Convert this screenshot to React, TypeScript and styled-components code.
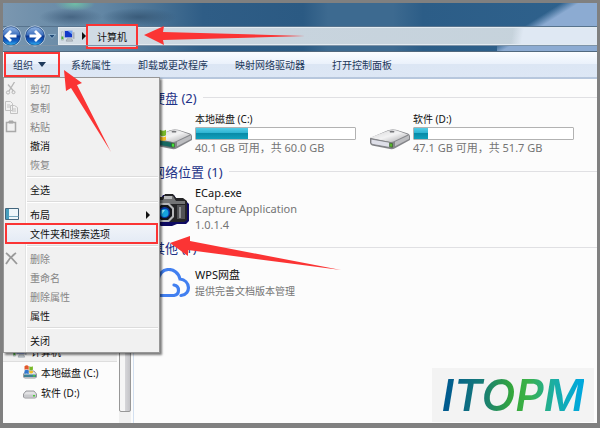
import React from "react";
import styled, { createGlobalStyle } from "styled-components";

const Global = createGlobalStyle`
  * { box-sizing: border-box; }
  body {
    margin: 0;
    background: #808080;
    font-family: "Noto Sans", "Noto Sans CJK SC", sans-serif;
    font-size: 10px;
    color: #111;
  }
  button { font: inherit; color: inherit; background: none; border: 0; padding: 0; text-align: left; }
  h2, p, ul { margin: 0; padding: 0; }
  ul { list-style: none; }
`;

const RED = "#fb3434";

const Screen = styled.div`
  position: relative;
  display: flex;
  height: 100vh;
  padding: 3px 3px 5px;
  overflow: hidden;
`;

const Window = styled.div`
  flex: 1;
  min-width: 0;
  display: flex;
  flex-direction: column;
  overflow: hidden;
  background: #fcfcfc;
`;

const Glass = styled.header`
  display: flex;
  flex-direction: column;
  background:
    linear-gradient(148deg, rgba(140, 171, 210, 0) 36%, #8cabd2 46%) right / 100px 100% no-repeat,
    radial-gradient(ellipse 20px 7px at 72px 1px, #6fbda6, rgba(111, 189, 166, 0)) no-repeat,
    radial-gradient(ellipse 32px 9px at 68px 14px, rgba(62, 92, 122, 0.8), rgba(62, 92, 122, 0)) no-repeat,
    radial-gradient(ellipse 38px 9px at 136px 14px, rgba(52, 84, 114, 0.8), rgba(52, 84, 114, 0)) no-repeat,
    linear-gradient(90deg, #7b97b0 0, #6f8faa 40px, #6286a4 100px, #4a7395 150px, #2f5d86 200px, #2b5a83 300px, #3d6a90 325px, #3d6a90 390px, #2c5d87 420px, #2f628d 100%);
`;

const TitleBar = styled.div`
  height: 24px;
  border-bottom: 1px solid #58748e;
`;

const AddressRow = styled.div`
  height: 18px;
  margin-left: -3px;
  display: flex;
  align-items: center;
`;

const RoundButton = styled.button`
  flex: none;
  width: 24px;
  height: 22px;
  display: flex;
`;

const HistoryButton = styled.button`
  flex: none;
  width: 10px;
  display: flex;
`;

const AddressBar = styled.nav`
  flex: 1;
  align-self: stretch;
  display: flex;
  align-items: center;
  padding-left: 2px;
  border: 1px solid #e3ebf1;
  border-right: 0;
  background:
    linear-gradient(100deg, rgba(223, 232, 243, 0) 84%, #dfe8f3 86%),
    linear-gradient(90deg, #d3dde5, #c8d4de 40%, #c5d2db);
`;

const Crumb = styled.button`
  flex: none;
  height: 25px;
  width: 52px;
  border: 2px solid ${RED};
  background: #d0dbe4;
  text-align: center;
`;

const GlassEdge = styled.div`
  height: 7px;
  border-top: 1px solid #7d93a8;
  border-bottom: 1px solid #51697f;
`;

const Toolbar = styled.div`
  height: 27px;
  flex: none;
  display: flex;
  align-items: center;
  gap: 11px;
  padding-left: 1px;
  color: #1e395b;
  background: linear-gradient(#fbfdff 0, #eaf1fb 48%, #dce6f4 50%, #dde7f5 100%);
  border-bottom: 2px solid #b7c7dd;
`;

const MenuAnchor = styled.div`
  position: relative;
`;

const OrganizeButton = styled.button`
  display: flex;
  align-items: center;
  gap: 5px;
  width: 56px;
  height: 25px;
  padding-left: 7px;
  border: 2px solid ${RED};
`;

const ToolbarActions = styled.div`
  display: flex;
  gap: 27px;
  white-space: nowrap;
`;

const Menu = styled.ul`
  position: absolute;
  z-index: 2;
  top: 100%;
  left: -1px;
  width: 157px;
  padding: 1px 1px 2px;
  border: 1px solid #979797;
  background: linear-gradient(90deg, #f1f1f1 0 21px, #e2e3e3 21px 22px, #fff 22px 23px, #f1f1f1 23px);
  box-shadow: 2px 2px 2px rgba(0, 0, 0, 0.5);
  color: #111;
`;

const MenuButton = styled.button<{ $marked?: boolean }>`
  display: flex;
  align-items: center;
  width: 100%;
  height: ${(p) => (p.$marked ? 21 : 19)}px;
  margin: ${(p) => (p.$marked ? "-1px 0" : "0")};
  border: ${(p) => (p.$marked ? `2px solid ${RED}` : "0")};
  padding: ${(p) => (p.$marked ? "0 8px 0 23px" : "0 8px 0 0")};
  background: ${(p) => (p.$marked ? "linear-gradient(#f1f4f9, #e4ebf5)" : "none")};
  &:disabled { color: #858585; }
`;

const MenuIcon = styled.span`
  flex: none;
  width: 25px;
  display: flex;
`;

const MenuLabel = styled.span`
  flex: 1;
`;

const Separator = styled.li`
  height: 6px;
  margin-left: 22px;
  background: linear-gradient(transparent 0 2px, #dcdcdc 2px 3px, #fff 3px 4px, transparent 4px);
`;

const Body = styled.div`
  flex: 1;
  min-height: 0;
  display: flex;
`;

const NavPane = styled.nav`
  flex: none;
  width: 131px;
  display: flex;
  border-right: 1px solid #d3e0f0;
`;

const NavList = styled.div`
  flex: 1;
  display: flex;
  flex-direction: column;
  justify-content: flex-end;
  padding-bottom: 21px;
`;

const NavItem = styled.button<{ $selected?: boolean }>`
  display: flex;
  align-items: center;
  gap: 4px;
  height: 20px;
  margin-right: 2px;
  padding-left: ${(p) => (p.$selected ? 10 : 20)}px;
  background: ${(p) => (p.$selected ? "#f0f0f0" : "none")};
  border-bottom: ${(p) => (p.$selected ? "1px solid #dedede" : "0")};
  white-space: nowrap;
`;

const ScrollTrack = styled.div`
  width: 12px;
  margin-right: 2px;
  padding-bottom: 11px;
  background: #f0f0f0;
  display: flex;
`;

const ScrollThumb = styled.div`
  flex: 1;
  border: 1px solid #979797;
  border-radius: 2px;
  background: linear-gradient(90deg, #f6f6f6 0 45%, #d5d5d8 55%, #c4c4c8);
`;

const Content = styled.main`
  position: relative;
  flex: 1;
  min-width: 0;
  padding: 8px 0 0 18px;
`;

const Section = styled.section<{ $height: number }>`
  min-height: ${(p) => p.$height}px;
`;

const Heading = styled.h2`
  display: flex;
  align-items: center;
  gap: 6px;
  height: 20px;
  font-size: 13px;
  font-weight: 400;
  color: #1e3287;
  white-space: nowrap;
  &::after {
    content: "";
    flex: 1;
    height: 1px;
    background: #e0e0e3;
  }
`;

const Tiles = styled.div<{ $top: number }>`
  display: grid;
  grid-template-columns: 218px 217px;
  padding-top: ${(p) => p.$top}px;
`;

const Tile = styled.article<{ $bottom?: boolean }>`
  display: grid;
  grid-template-columns: 38px 161px;
  column-gap: 5px;
  align-items: center;
`;

const DriveSlot = styled.div`
  display: flex;
  padding-top: 10px;
`;

const TileText = styled.div`
  display: flex;
  flex-direction: column;
`;

const Name = styled.p<{ $large?: boolean }>`
  height: 16px;
  line-height: 16px;
  font-size: ${(p) => (p.$large ? 11 : 10)}px;
  white-space: nowrap;
`;

const Detail = styled(Name)`
  color: #747474;
`;

const Meter = styled.div`
  height: 13px;
  border: 1px solid #b2b2b2;
  border-radius: 1px;
  background: #fff;
`;

const MeterFill = styled.div`
  height: 100%;
  background: linear-gradient(#54cce6 0, #2db4d2 45%, #088ba8 50%, #10a0bb 100%);
`;

const Brand = styled.div`
  position: absolute;
  right: 3px;
  bottom: 1px;
  display: flex;
  align-items: center;
  justify-content: center;
  width: 162px;
  height: 54px;
  background: #f3f3f3;
`;

const BrandText = styled.span`
  font: italic 600 44px/54px Inter, sans-serif;
  color: transparent;
  background: linear-gradient(90deg, #005b8f 4%, #177b78 28%, #35a83a 50%, #3bb149 60%, #1daea0 78%, #00a8dc 97%);
  background-clip: text;
`;

const ArrowLayer = styled.svg<{ $x: number; $y: number }>`
  position: absolute;
  z-index: 3;
  left: ${(p) => p.$x}px;
  top: ${(p) => p.$y}px;
  fill: ${RED};
  pointer-events: none;
`;

function Arrow({ x, y, w, h, points }: { x: number; y: number; w: number; h: number; points: string }) {
  return (
    <ArrowLayer $x={x} $y={y} width={w} height={h} aria-hidden="true">
      <polygon points={points} />
    </ArrowLayer>
  );
}

function NavArrow({ back = false }: { back?: boolean }) {
  const id = back ? "orb-back" : "orb-forward";
  return (
    <svg width="22" height="22" viewBox="0 0 22 22" aria-hidden="true">
      <defs>
        <linearGradient id={id} x1="0" y1="0" x2="0" y2="1">
          <stop offset="0" stopColor="#9dbde8" />
          <stop offset=".45" stopColor="#3a6dbd" />
          <stop offset=".5" stopColor="#0d3590" />
          <stop offset=".75" stopColor="#1461c4" />
          <stop offset="1" stopColor="#38c4fa" />
        </linearGradient>
      </defs>
      <circle cx="11" cy="11" r="10" fill={`url(#${id})`} stroke="#c4d5e6" />
      <circle cx="11" cy="11" r="9.300" fill="none" stroke="#173f78" strokeWidth=".7" />
      <path
        d={back ? "M16.500 11H6.500M11 6l-5 5 5 5" : "M5.500 11h10M11 6l5 5-5 5"}
        fill="none"
        stroke="#fff"
        strokeWidth="2.800"
      />
    </svg>
  );
}

function ComputerIcon() {
  return (
    <svg width="14" height="14" viewBox="0 0 15 15" aria-hidden="true">
      <path d="M.5 3h2v9h-2z" fill="#dfe5e8" stroke="#8b979f" strokeWidth=".5" />
      <path d="M.5 8h2v3h-2z" fill="#4caf3a" />
      <path d="M3.500 1.500h9v8h-9z" fill="#1238c8" stroke="#d8dde2" />
      <path d="M7 2h5v4z" fill="#6fa5f5" />
      <path d="M12.500 3.500h2v7h-2z" fill="#a9b0b8" />
      <path d="M6.500 10.500h5l1 2.500h-7z" fill="#c1c8ce" stroke="#77828c" strokeWidth=".5" />
    </svg>
  );
}

function Flag() {
  return (
    <g>
      <path d="M0 2q4-3 7 0v6q-4-2-7 0z" fill="#e2582a" />
      <path d="M8 2q3 2 6 0v6q-3 2-6 0z" fill="#7ab929" />
      <path d="M0 9q4-2 7 0v6q-4-2-7 0z" fill="#3178cf" />
      <path d="M8 9q3 2 6 0v4q-3 2-6 0z" fill="#f4bd25" />
    </g>
  );
}

function DriveIcon({ system = false }: { system?: boolean }) {
  const id = `drive-${system ? "c" : "d"}`;
  return (
    <svg width="40" height="22" viewBox="0 0 40 24" preserveAspectRatio="none" overflow="visible" aria-hidden="true">
      <defs>
        <linearGradient id={id} x1="0" y1="0" x2="1" y2="1">
          <stop offset="0" stopColor="#d5d5d6" />
          <stop offset=".5" stopColor="#f2f2f3" />
          <stop offset="1" stopColor="#a8a8aa" />
        </linearGradient>
      </defs>
      <path d="M0 11 18 2.500q4-1.500 8-.5l12 4q2 1 2 3v4L25 22q-2 1.500-5 1L2 19q-2-1-2-3z" fill="#85868a" />
      <path d="M1 10 18 3q4-1.500 8-.5l12 4.500-14 7.500q-2 1-5 .5L1 11z" fill={`url(#${id})`} />
      <path d="M1 12l18 3.500q2 .5 2 2v4L3 18q-2-.5-2-2z" fill={system ? "#176a62" : "#dedfe8"} stroke="#6f7074" strokeWidth=".7" />
      <path d="M25 15l14-7v4l-14 8z" fill="#bcbdc0" />
      <path d="M19.500 16.500l3 .5v4l-3-.5z" fill={system ? "#43e23a" : "#55b52a"} stroke="#345228" strokeWidth=".6" />
      <ellipse cx="22" cy="4" rx="2.500" ry="1" fill="#75767a" />
      {system && <Flag />}
    </svg>
  );
}

function SmallDriveIcon({ system = false }: { system?: boolean }) {
  return (
    <svg width="14" height="14" viewBox="0 0 14 14" aria-hidden="true">
      <path d="M0.500 9 3 6h8l2.500 3v3l-1 1h-11l-1-1z" fill="#e3e3e5" stroke="#808287" strokeWidth=".8" />
      <path d="M1 9.500h12V12H1z" fill={system ? "#3f8194" : "#c9cacd"} />
      <path d="M10 10h2v1.500h-2z" fill="#4cc93a" />
      {system && (
        <g transform="translate(1.500 0) scale(.6)">
          <Flag />
        </g>
      )}
    </svg>
  );
}

function CameraIcon() {
  return (
    <svg width="38" height="33" viewBox="0 0 38 33" aria-hidden="true">
      <path d="M0 7h8l3-5h11l3 5h8l4 4v17l-3 3h-9l-5 2H9l-5-3H0z" fill="#0e0a63" />
      <path d="M0 6h6V4h5l2-3h8l3 4h7l4 3v19l-3 2H4l-4-1z" fill="#252527" />
      <path d="M1 7h10l2-4h8l3 5h9v3H1z" fill="#737476" />
      <path d="M12 3h8v3h-8z" fill="#b9babb" />
      <path d="M2 12h5v14H2zM25 12h8v14h-8z" fill="#515255" />
      <path d="M27 14h2v11h-2z" fill="#929396" />
      <path d="M8 10h9l5 5v9l-5 5H8l-5-5v-9z" fill="#b7b8ba" />
      <path d="M9 12h7l4 4v7l-4 4H9l-4-4v-7z" fill="#15161b" />
      <circle cx="12.500" cy="19.500" r="5.500" fill="#0b3ba8" />
      <circle cx="12.500" cy="20" r="4" fill="#16a5df" />
      <path d="M10 17h3l-3 4z" fill="#90e9fb" />
    </svg>
  );
}

function CloudIcon() {
  return (
    <svg width="39" height="30" viewBox="0 0 39 30" fill="none" stroke="#417ff0" strokeWidth="3.200" strokeLinecap="round" aria-hidden="true">
      <path d="M6 27C1 25-1 17 6 13 7-2 25-2 28 11c10 1 12 15 1 16.500" />
      <path d="M6 27.500h16c6-1 6-9.500 0-10.500" />
    </svg>
  );
}

const CutIcon = () => (
  <svg width="12" height="13" viewBox="0 0 12 13" fill="none" stroke="#b5b5b5" aria-hidden="true">
    <path d="M9.500 0 4 9M3 2.500 8.500 9" strokeWidth="1.300" />
    <circle cx="3" cy="10.500" r="1.600" />
    <circle cx="8.500" cy="10.200" r="1.500" />
  </svg>
);

const CopyIcon = () => (
  <svg width="13" height="13" viewBox="0 0 13 13" fill="#f2f2f2" stroke="#c2c2c2" aria-hidden="true">
    <path d="M.5.5h5l2 2v7h-7zM5.500 4.500h4l3 2v6h-7z" />
    <path d="M2 4h3M2 6h3M7 8h4M7 10h4" />
  </svg>
);

const PasteIcon = () => (
  <svg width="12" height="13" viewBox="0 0 12 13" fill="none" stroke="#a9a9a9" aria-hidden="true">
    <path d="M1.500 2.500h9v9h-9z" strokeWidth="1.500" />
    <path d="M4 1h4v2H4z" fill="#a9a9a9" />
  </svg>
);

const LayoutIcon = () => (
  <svg width="15" height="13" viewBox="0 0 15 13" aria-hidden="true">
    <path d="M.5.5h13v11H.5z" fill="#eef7fb" stroke="#42657d" />
    <path d="M1 1h3v10H1z" fill="#479ebd" />
    <path d="M4 8.500h9.500" stroke="#78a9bf" />
  </svg>
);

const DeleteIcon = () => (
  <svg width="13" height="13" viewBox="0 0 13 13" fill="none" stroke="#999" strokeWidth="1.800" aria-hidden="true">
    <path d="M1 1q5 4 11 11M11 1Q5 5 1 12" />
  </svg>
);

type Entry = { label: string; off?: boolean; icon?: React.ReactNode; submenu?: boolean; marked?: boolean } | null;

const entries: Entry[] = [
  { label: "剪切", off: true, icon: <CutIcon /> },
  { label: "复制", off: true, icon: <CopyIcon /> },
  { label: "粘贴", off: true, icon: <PasteIcon /> },
  { label: "撤消" },
  { label: "恢复", off: true },
  null,
  { label: "全选" },
  null,
  { label: "布局", icon: <LayoutIcon />, submenu: true },
  { label: "文件夹和搜索选项", marked: true },
  null,
  { label: "删除", off: true, icon: <DeleteIcon /> },
  { label: "重命名", off: true },
  { label: "删除属性", off: true },
  { label: "属性" },
  null,
  { label: "关闭" },
];

function OrganizeMenu() {
  return (
    <Menu>
      {entries.map((e, i) =>
        e === null ? (
          <Separator key={i} />
        ) : (
          <li key={i}>
            <MenuButton disabled={e.off} $marked={e.marked}>
              {!e.marked && <MenuIcon>{e.icon}</MenuIcon>}
              <MenuLabel>{e.label}</MenuLabel>
              {e.submenu && (
                <svg width="4" height="8" viewBox="0 0 4 8" aria-hidden="true">
                  <path d="M0 0l4 4-4 4z" fill="#111" />
                </svg>
              )}
            </MenuButton>
          </li>
        ),
      )}
    </Menu>
  );
}

function Drive({ name, info, used, system }: { name: string; info: string; used: number; system?: boolean }) {
  return (
    <Tile>
      <DriveSlot><DriveIcon system={system} /></DriveSlot>
      <TileText>
        <Name>{name}</Name>
        <Meter role="meter" aria-label={name} aria-valuemin={0} aria-valuemax={100} aria-valuenow={used}>
          <MeterFill style={{ width: `${used}%` }} />
        </Meter>
        <Detail $large>{info}</Detail>
      </TileText>
    </Tile>
  );
}

export default function App() {
  return (
    <Screen>
      <Global />
      <Window>
        <Glass>
          <TitleBar />
          <AddressRow>
            <RoundButton aria-label="后退"><NavArrow back /></RoundButton>
            <RoundButton aria-label="前进"><NavArrow /></RoundButton>
            <HistoryButton aria-label="历史记录">
              <svg width="8" height="5" viewBox="0 0 8 5" aria-hidden="true">
                <path d="M.5.500h7L4 4.500z" fill="#224c78" stroke="#a8c9e2" strokeWidth=".7" />
              </svg>
            </HistoryButton>
            <AddressBar aria-label="地址">
              <ComputerIcon />
              <svg width="11" height="8" viewBox="0 0 11 8" aria-hidden="true">
                <path d="M7 0l4 4-4 4z" fill="#111" />
              </svg>
              <Crumb>计算机</Crumb>
            </AddressBar>
          </AddressRow>
          <GlassEdge />
        </Glass>
        <Toolbar>
          <MenuAnchor>
            <OrganizeButton aria-haspopup="menu" aria-expanded="true">
              组织
              <svg width="8" height="5" viewBox="0 0 8 5" aria-hidden="true">
                <path d="M0 0h8L4 5z" fill="#1e395b" />
              </svg>
            </OrganizeButton>
            <OrganizeMenu />
          </MenuAnchor>
          <ToolbarActions>
            <button>系统属性</button>
            <button>卸载或更改程序</button>
            <button>映射网络驱动器</button>
            <button>打开控制面板</button>
          </ToolbarActions>
        </Toolbar>
        <Body>
          <NavPane>
            <NavList>
              <NavItem $selected><ComputerIcon />计算机</NavItem>
              <NavItem><SmallDriveIcon system />本地磁盘 (C:)</NavItem>
              <NavItem><SmallDriveIcon />软件 (D:)</NavItem>
            </NavList>
            <ScrollTrack><ScrollThumb /></ScrollTrack>
          </NavPane>
          <Content>
            <Section $height={74}>
              <Heading>硬盘 (2)</Heading>
              <Tiles $top={4}>
                <Drive name="本地磁盘 (C:)" info="40.1 GB 可用，共 60.0 GB" used={33} system />
                <Drive name="软件 (D:)" info="47.1 GB 可用，共 51.7 GB" used={9} />
              </Tiles>
            </Section>
            <Section $height={76}>
              <Heading>网络位置 (1)</Heading>
              <Tiles $top={4}>
                <Tile>
                  <CameraIcon />
                  <TileText>
                    <Name $large>ECap.exe</Name>
                    <Detail $large>Capture Application</Detail>
                    <Detail $large>1.0.1.4</Detail>
                  </TileText>
                </Tile>
              </Tiles>
            </Section>
            <Section $height={76}>
              <Heading>其他 (1)</Heading>
              <Tiles $top={10}>
                <Tile>
                  <CloudIcon />
                  <TileText>
                    <Name $large>WPS网盘</Name>
                    <Detail>提供完善文档版本管理</Detail>
                  </TileText>
                </Tile>
              </Tiles>
            </Section>
            <Brand><BrandText>ITOPM</BrandText></Brand>
          </Content>
        </Body>
      </Window>
      <Arrow x={144} y={26} w={162} h={20} points="0,9 20,0 19,6 161,10 19,14 20,19" />
      <Arrow x={64} y={70} w={48} h={82} points="0,0 18,13 13,15 47,82 7,18 2,21" />
      <Arrow x={170} y={236} w={172} h={36} points="0,7 20,0 20,5 171,34 18,14 18,20" />
    </Screen>
  );
}
